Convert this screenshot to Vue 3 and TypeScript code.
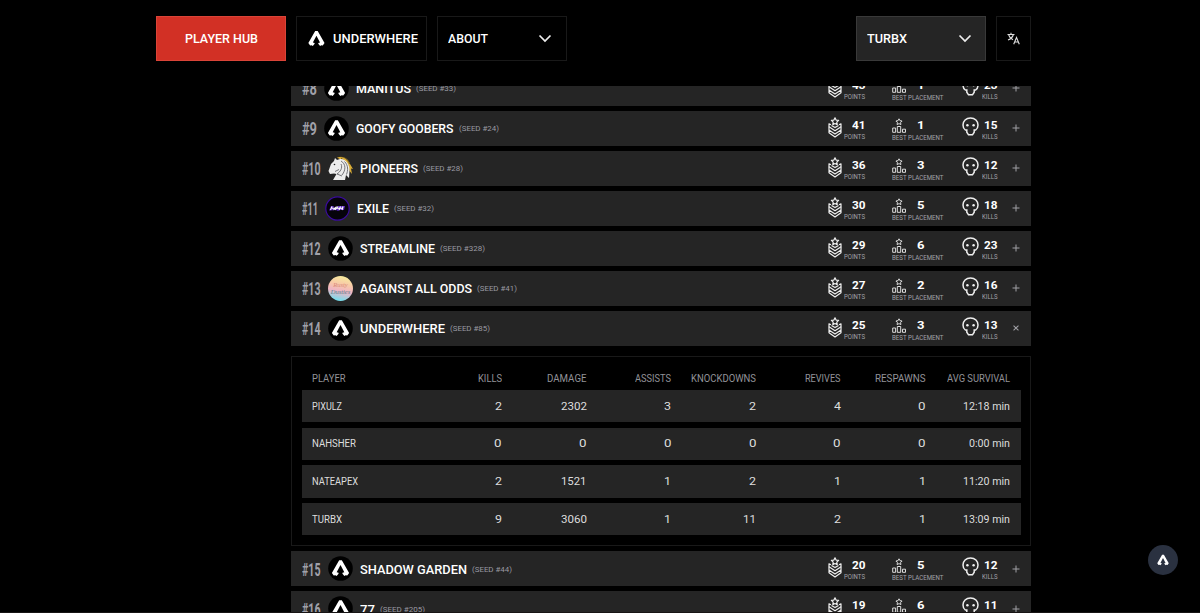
<script setup lang="ts">
import type { Directive } from 'vue'

interface Team {
  rank: number
  rankWidth: number
  name: string
  nameWidth: number
  seed: number
  seedWidth: number
  points: number
  best: number
  kills: number
  logo: 'apex' | 'horse' | 'exile' | 'pastel'
  open?: boolean
}

// Stretches a label to a fixed advance width so it reads like the wide display face.
const vFit: Directive<HTMLElement, number> = {
  mounted(el, { value }) {
    const natural = el.getBoundingClientRect().width
    el.style.width = `${value}px`
    el.style.transform = `scaleX(${value / natural})`
  },
}

const teams: Team[] = [
  { rank: 8, rankWidth: 15, name: 'MANITUS', nameWidth: 55, seed: 33, seedWidth: 40, points: 43, best: 1, kills: 23, logo: 'apex' },
  { rank: 9, rankWidth: 15, name: 'GOOFY GOOBERS', nameWidth: 97.5, seed: 24, seedWidth: 40, points: 41, best: 1, kills: 15, logo: 'apex' },
  { rank: 10, rankWidth: 18.5, name: 'PIONEERS', nameWidth: 58, seed: 28, seedWidth: 40, points: 36, best: 3, kills: 12, logo: 'horse' },
  { rank: 11, rankWidth: 16, name: 'EXILE', nameWidth: 32, seed: 32, seedWidth: 40, points: 30, best: 5, kills: 18, logo: 'exile' },
  { rank: 12, rankWidth: 18.5, name: 'STREAMLINE', nameWidth: 75, seed: 328, seedWidth: 45, points: 29, best: 6, kills: 23, logo: 'apex' },
  { rank: 13, rankWidth: 18.5, name: 'AGAINST ALL ODDS', nameWidth: 112, seed: 41, seedWidth: 40, points: 27, best: 2, kills: 16, logo: 'pastel' },
  { rank: 14, rankWidth: 18.5, name: 'UNDERWHERE', nameWidth: 85, seed: 85, seedWidth: 40, points: 25, best: 3, kills: 13, logo: 'apex', open: true },
  { rank: 15, rankWidth: 18.5, name: 'SHADOW GARDEN', nameWidth: 107, seed: 44, seedWidth: 40, points: 20, best: 5, kills: 12, logo: 'apex' },
  { rank: 16, rankWidth: 18.5, name: '77', nameWidth: 15, seed: 205, seedWidth: 45, points: 19, best: 6, kills: 11, logo: 'apex' },
]

const columns: [string, number][] = [
  ['PLAYER', 33.5], ['KILLS', 24], ['DAMAGE', 39.5], ['ASSISTS', 36], ['KNOCKDOWNS', 65],
  ['REVIVES', 35.5], ['RESPAWNS', 50.5], ['AVG SURVIVAL', 63],
]

const players: [string, number][][] = [
  [['PIXULZ', 30], ['2', 7], ['2302', 26], ['3', 7], ['2', 7], ['4', 7], ['0', 7.5], ['12:18 min', 47]],
  [['NAHSHER', 44], ['0', 7.5], ['0', 7.5], ['0', 7.5], ['0', 7.5], ['0', 7.5], ['0', 7.5], ['0:00 min', 41]],
  [['NATEAPEX', 46], ['2', 7], ['1521', 25.5], ['1', 7], ['2', 7], ['1', 7], ['1', 7], ['11:20 min', 47]],
  [['TURBX', 30], ['9', 7], ['3060', 26], ['1', 7], ['11', 13], ['2', 7], ['1', 7], ['13:09 min', 47]],
]
</script>

<template>
  <div class="page">
    <svg class="defs" width="0" height="0">
      <symbol id="apex" viewBox="0 0 24 24">
        <path d="M10.200 1.500h3.600L23.500 18.500l-2.500 3.500-2.200-.5-1.600 1-2.600-2.900v-1.300l2.500-.5L12 8 6.900 17.800l2.500.5v1.300l-2.600 2.900-1.600-1-2.200.5L.5 18.500z" fill="#fff" />
      </symbol>
      <symbol id="chevron" viewBox="0 0 14 9">
        <path d="M1.500 1.500 7 7l5.500-5.500" fill="none" stroke="#eee" stroke-width="1.700" />
      </symbol>
    </svg>

    <header class="nav">
      <button class="btn hub"><span v-fit="73" class="fit">PLAYER HUB</span></button>
      <button class="btn team">
        <svg class="mark"><use href="#apex" /></svg>
        <span v-fit="85" class="fit">UNDERWHERE</span>
      </button>
      <button class="btn select">
        <span v-fit="40" class="fit">ABOUT</span>
        <svg class="chev"><use href="#chevron" /></svg>
      </button>
      <button class="btn select user">
        <span v-fit="40" class="fit">TURBX</span>
        <svg class="chev"><use href="#chevron" /></svg>
      </button>
      <button class="btn lang">
        <svg viewBox="0 0 13 13" width="13" height="13" fill="none" stroke="#ddd" stroke-width="1.100">
          <path d="M.5 2.500h7M4 .8v1.700M1.700 3c.6 2 2 3.700 4.300 4.800M6.300 3C5.600 5 3.800 7 1 8" />
          <path d="M6.700 12.300 9.500 5.500l2.800 6.800M7.600 10h3.800" />
        </svg>
      </button>
    </header>

    <main class="board">
      <div class="list">
        <template v-for="t in teams" :key="t.rank">
          <div class="row">
            <span class="rank"><span v-fit="t.rankWidth" class="fit">#{{ t.rank }}</span></span>
            <svg v-if="t.logo === 'apex'" class="avatar" viewBox="0 0 25 25">
              <circle cx="12.500" cy="12.500" r="12.300" fill="#000" />
              <use href="#apex" x="3.500" y="3" width="18" height="18" />
            </svg>
            <svg v-else-if="t.logo === 'horse'" class="avatar" viewBox="0 0 25 25">
              <path d="M9 1.500C15-1 21 3 22 8l3 5-2-.5L24 18l-2.500-3L20 8z" fill="#dcae36" />
              <path d="M10 .8C15-.5 20 3 21.500 8M13 2l6 5" fill="none" stroke="#2c281c" stroke-width=".6" />
              <path d="M12 3c6-.5 10 5.500 9.500 12l-.5 7-3-3-1 5H5l3.500-6L6 17.500l-4 .5-1.500-3L3 8l3-3 1-3 2 2z" fill="#ededed" />
              <path d="M13 5c5 3 5 9 1 14M16.500 5.500c4 4 3.500 9 2 13M11 13.500l-4 2M13 8c2 4-1 8-4 10l5 2" fill="none" stroke="#55555a" stroke-width=".8" />
              <circle cx="6.500" cy="8.500" r=".8" fill="#222" />
            </svg>
            <svg v-else-if="t.logo === 'exile'" class="avatar" viewBox="0 0 25 25">
              <circle cx="12.500" cy="12.500" r="11.700" fill="#05030a" stroke="#3a0c9c" stroke-width="1.200" />
              <path d="M4 14.500 6 10h3l-1 1.500h4l1-1.500h7l-1 4h-4l-2 1-2-1z" fill="#5b28bd" />
              <path d="m5.500 14 1.500-3.500M8.500 14l3-3.500M10 14l3-3.500M14 14l1.500-3.500M17 14l1-3.500M7 12.300h11" stroke="#fff" stroke-width="1.100" />
            </svg>
            <svg v-else class="avatar" viewBox="0 0 25 25">
              <defs>
                <linearGradient id="pastel" x1="0.700" y1="0" x2="0.500" y2="1">
                  <stop offset="0" stop-color="#f7ee9c" />
                  <stop offset=".35" stop-color="#f8c9a8" />
                  <stop offset=".62" stop-color="#efb4c5" />
                  <stop offset="1" stop-color="#72dfee" />
                </linearGradient>
              </defs>
              <circle cx="12.500" cy="12.500" r="12.500" fill="url(#pastel)" />
              <text x="12.500" y="11" class="script pink" text-anchor="middle">Rusty</text>
              <text x="12.500" y="18" class="script teal" text-anchor="middle">Dusties</text>
            </svg>
            <span class="name"><span v-fit="t.nameWidth" class="fit">{{ t.name }}</span></span>
            <span class="seed"><span v-fit="t.seedWidth" class="fit">(SEED #{{ t.seed }})</span></span>

            <div class="stat points">
              <svg viewBox="0 0 14 21" width="14" height="21" fill="none" stroke="#eee" stroke-width="1.200" stroke-linejoin="round">
                <path d="m7 .8 1.100 2.300 2.500.3-1.800 1.700.4 2.500L7 6.500 4.800 7.600l.4-2.500-1.800-1.700 2.500-.3z" />
                <path d="M3 7.800 1 6.800v3l6 3.900 6-3.900v-3l-2 1M3.500 8.500 7 10.600l3.500-2.100" />
                <path d="M1 9.800v6L7 20l6-4.200v-6M1 13l6 4 6-4" />
              </svg>
              <div class="figures">
                <b><span v-fit="13.500" class="fit">{{ t.points }}</span></b>
                <small><span v-fit="21" class="fit">POINTS</span></small>
              </div>
            </div>
            <div class="stat best">
              <div class="pair">
                <svg viewBox="0 0 15 15" width="15" height="15" fill="none" stroke="#ddd" stroke-width="1">
                  <path d="m7 .8 1 1.900 2.100.3-1.500 1.500.3 2.100L7 5.600 5.100 6.600l.3-2.100L3.900 3 6 2.700z" />
                  <path d="M5.300 8.500h3.400v5.800H5.300zM.7 10h2.900v4.300H.7zM10.500 11.200h3v3.100h-3z" />
                </svg>
                <b><span v-fit="7.500" class="fit">{{ t.best }}</span></b>
              </div>
              <small><span v-fit="51.500" class="fit">BEST PLACEMENT</span></small>
            </div>
            <div class="stat kills">
              <svg viewBox="0 0 17 19" width="17" height="19">
                <path d="M8.500 1C4 1 1 4 1 8c0 2.300.8 4 2.300 5h1.500v2.200l1.700 2.600h4l1.700-2.600V13h1.500C15.200 12 16 10.300 16 8c0-4-3-7-7.500-7z" fill="none" stroke="#eee" stroke-width="1.500" />
                <circle cx="5.400" cy="8.200" r="1.250" fill="#eee" /><circle cx="11.600" cy="8.200" r="1.250" fill="#eee" />
              </svg>
              <div class="figures">
                <b><span v-fit="13.500" class="fit">{{ t.kills }}</span></b>
                <small><span v-fit="15.500" class="fit">KILLS</span></small>
              </div>
            </div>
            <svg class="toggle" :class="{ close: t.open }" viewBox="0 0 8 8">
              <path d="M4 .5v7M.5 4h7" stroke="#a1a1a6" stroke-width="1" />
            </svg>
          </div>

          <section v-if="t.open" class="panel">
            <div class="line head">
              <span v-for="[label, w] in columns" :key="label"><span v-fit="w" class="fit">{{ label }}</span></span>
            </div>
            <div v-for="p in players" :key="p[0][0]" class="line player">
              <span v-for="([value, w], i) in p" :key="i"><span v-fit="w" class="fit">{{ value }}</span></span>
            </div>
          </section>
        </template>
      </div>
    </main>
    <footer class="edge"></footer>

    <button class="bubble"><svg><use href="#apex" /></svg></button>
  </div>
</template>

<style>
html,
body {
  background: #000;
  overflow: hidden;
}
</style>

<style scoped>
.page {
  position: relative;
  width: 1200px;
  height: 613px;
  overflow: hidden;
  background: #000;
  color: #fff;
  font-family: Roboto, 'Liberation Sans', sans-serif;
}
.defs {
  display: block;
}
.fit {
  display: inline-block;
  white-space: nowrap;
  transform-origin: 0 50%;
  text-align: left;
}
.nav {
  display: flex;
  height: 86px;
  box-sizing: border-box;
  padding: 15.500px 169px 0 156px;
  gap: 10px;
}
.btn {
  display: flex;
  align-items: center;
  box-sizing: border-box;
  width: 130.300px;
  height: 45.500px;
  margin: 0;
  padding: 2px 10px 0;
  border: 1px solid #191919;
  background: #000;
  color: #fff;
  font: 500 12.800px/16px Roboto, sans-serif;
}
.hub {
  justify-content: center;
  background: #d23025;
  border-color: #da4438;
}
.team {
  padding: 1px 8px 0 11px;
}
.mark {
  width: 17px;
  height: 17px;
  margin-right: 8px;
}
.select {
  justify-content: space-between;
}
.chev {
  width: 14px;
  height: 9px;
  margin: 0 3.500px 2px 0;
}
.user {
  margin-left: auto;
  background: #252525;
  border-color: #393939;
}
.lang {
  width: 35px;
  padding: 0;
  justify-content: center;
}
.board {
  height: 526px;
  overflow: hidden;
}
.edge {
  height: 1px;
  background: #171414;
}
.list {
  display: flex;
  flex-direction: column;
  gap: 5.080px;
  width: 740px;
  margin: -15.500px 0 0 291.250px;
}
.row {
  display: flex;
  flex: none;
  align-items: center;
  height: 35px;
  box-sizing: border-box;
  padding-left: 10.500px;
  background: #252525;
}
.rank {
  height: 22px;
  color: #a1a1aa;
  font: 700 18.500px/24px Roboto, sans-serif;
}
.avatar {
  width: 25px;
  height: 25px;
  margin: 0 7px 0 7.500px;
  flex: none;
}
.script {
  font: italic 6.500px 'Liberation Serif', serif;
}
.pink {
  fill: #d98b79;
}
.teal {
  fill: #55818c;
}
.name {
  font: 500 12.800px/16px Roboto, sans-serif;
  padding-top: 2px;
}
.seed {
  margin-left: 5px;
  padding-top: 2px;
  color: #9a9aa2;
  font: 400 7px/10px Roboto, sans-serif;
}
.stat {
  display: flex;
  flex: none;
  height: 35px;
}
.stat svg {
  flex: none;
}
.stat b {
  font: 700 11.500px/12px Roboto, sans-serif;
  height: 12px;
}
.stat small {
  color: #a1a1a8;
  font: 400 6.500px/8px Roboto, sans-serif;
  height: 8px;
}
.figures {
  display: flex;
  flex-direction: column;
  align-items: flex-end;
  flex: 1;
  padding-top: 8px;
  gap: 2px;
}
.points {
  width: 37.500px;
  margin-left: auto;
  margin-right: 26.500px;
}
.points svg {
  margin-top: 6px;
  width: 14px;
}
.points .figures {
  margin-left: -4px;
}
.best {
  width: 52px;
  flex-direction: column;
  margin-right: 18px;
}
.pair {
  display: flex;
  height: 22px;
}
.best svg {
  margin-top: 7px;
}
.best b {
  margin: 8px 0 0 10px;
}
.best small {
  padding-top: 1px;
}
.kills {
  width: 36px;
  margin-right: 14px;
}
.kills svg {
  margin-top: 6px;
}
.kills .figures {
  margin-left: -4px;
}
.toggle {
  width: 8px;
  height: 8px;
  margin-right: 11.500px;
  flex: none;
}
.close {
  transform: rotate(45deg);
}
.panel {
  display: flex;
  flex-direction: column;
  gap: 5.400px;
  flex: none;
  box-sizing: border-box;
  height: 190px;
  margin-top: 5px;
  padding: 10px 9.500px;
  border: 1px solid #191919;
}
.line {
  display: grid;
  grid-template-columns: 105.300px repeat(7, 84.750px);
  align-items: center;
  flex: none;
  height: 32.300px;
  box-sizing: border-box;
  padding: 1px 0 0 10px;
  background: #252525;
  color: #ddd;
  font: 400 10.500px/14px Roboto, sans-serif;
}
.line > span {
  text-align: right;
}
.line > span:first-child {
  text-align: left;
}
.head {
  height: 22px;
  margin-bottom: -4.500px;
  background: none;
  color: #929298;
}
.bubble {
  position: absolute;
  left: 1148px;
  top: 544.500px;
  display: flex;
  align-items: center;
  justify-content: center;
  width: 30px;
  height: 30px;
  padding: 0;
  border: 0;
  border-radius: 50%;
  background: #2a3140;
}
.bubble svg {
  width: 12px;
  height: 12px;
}
</style>
